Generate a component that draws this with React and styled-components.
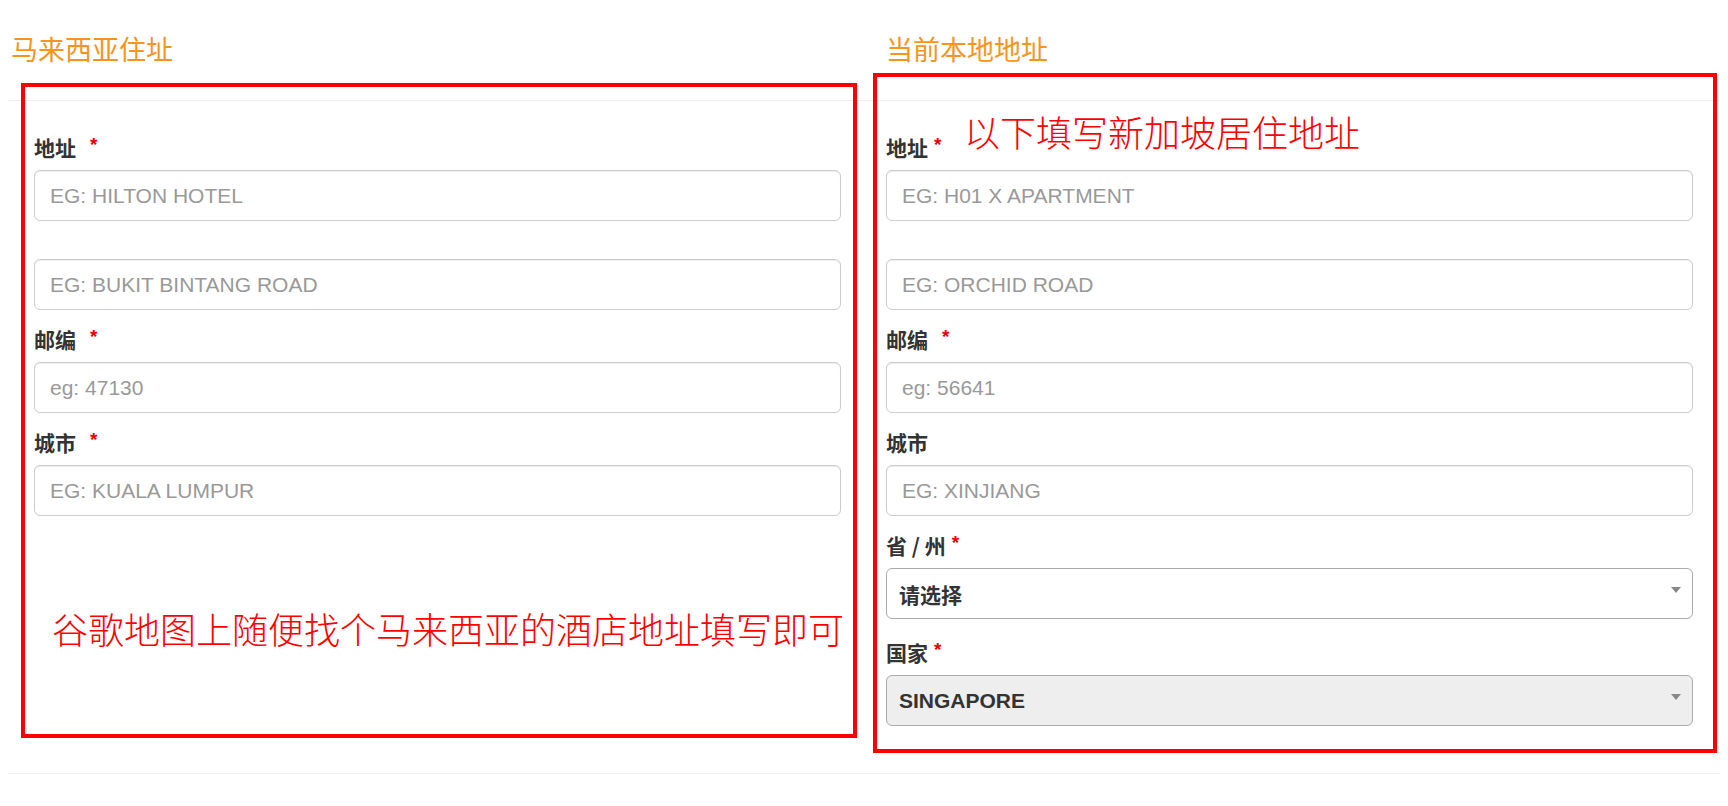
import styled, { createGlobalStyle } from 'styled-components'

const GlobalStyle = createGlobalStyle`
  body {
    margin: 0;
    background: #fff;
    font-family: "Liberation Sans", "Noto Sans CJK SC", sans-serif;
  }
`

// #region styles
const Page = styled.div`
  position: relative;
  width: 1728px;
  padding: 0 8px;
  box-sizing: border-box;
`

const Header = styled.div`
  display: grid;
  grid-template-columns: 856px 856px;
  height: 101px;
  box-sizing: border-box;
  border-bottom: 1px solid #eee;
`

const Title = styled.h4`
  margin: 0;
  padding: 34px 0 0 ${({ $indent }) => $indent}px;
  font-family: "Noto Sans CJK SC", sans-serif;
  font-weight: 400;
  font-size: 27px;
  line-height: 30px;
  color: #f7941d;
`

const Body = styled.div`
  display: grid;
  grid-template-columns: 856px 856px;
  padding: 31px 0 47px;
  border-bottom: 1px solid #eee;
`

const Column = styled.div`
  padding: 0 ${({ $right }) => $right}px 0 ${({ $left }) => $left}px;
`

const FormGroup = styled.div`
  margin-bottom: ${({ $gap }) => $gap}px;

  &:last-child {
    margin-bottom: 0;
  }
`

const Label = styled.label`
  display: flex;
  align-items: center;
  height: 30px;
  margin-bottom: 8px;
  font-family: "Noto Sans CJK SC", sans-serif;
  font-weight: 700;
  font-size: 21px;
  color: #333;
`

const Required = styled.span`
  margin-left: ${({ $gap }) => $gap}px;
  font-family: "Liberation Sans", sans-serif;
  font-size: 19px;
  color: #e00;
  align-self: flex-start;
  margin-top: 2px;
`

const Input = styled.input`
  display: block;
  width: 100%;
  height: 51px;
  margin-top: ${({ $offset }) => $offset || 0}px;
  padding: 0 15px;
  box-sizing: border-box;
  border: 1px solid #ccc;
  border-radius: 6px;
  box-shadow: inset 0 1px 1px rgba(0, 0, 0, 0.075);
  font-family: "Liberation Sans", sans-serif;
  font-size: 21px;
  color: #555;
  background: #fff;
  outline: none;

  &::placeholder {
    color: #999;
  }
`

const SelectBox = styled.div`
  display: flex;
  align-items: center;
  justify-content: space-between;
  height: 51px;
  padding: 0 11px 0 12px;
  box-sizing: border-box;
  border: 1px solid #aaa;
  border-radius: 6px;
  background: ${({ $disabled }) => ($disabled ? '#eee' : '#fff')};
  font-family: "Liberation Sans", "Noto Sans CJK SC", sans-serif;
  font-weight: 700;
  font-size: 21px;
  color: #333;
`

const Arrow = styled.span`
  width: 0;
  height: 0;
  margin-top: -7px;
  border-left: 5px solid transparent;
  border-right: 5px solid transparent;
  border-top: 6px solid #888;
`

const RedBox = styled.div`
  position: absolute;
  left: ${({ $x }) => $x}px;
  top: ${({ $y }) => $y}px;
  width: ${({ $w }) => $w}px;
  height: ${({ $h }) => $h}px;
  box-sizing: border-box;
  border: 4px solid #f00;
  pointer-events: none;
`

const Note = styled.div`
  position: absolute;
  left: ${({ $x }) => $x}px;
  top: ${({ $y }) => $y}px;
  font-family: "Noto Sans CJK SC", sans-serif;
  font-weight: 300;
  font-size: 36px;
  line-height: 36px;
  color: #f00;
  white-space: nowrap;
`
// #endregion

const Field = ({ label, star, gap = 14, children }) => (
  <FormGroup $gap={gap}>
    <Label>
      {label}
      {star ? <Required $gap={star}>*</Required> : null}
    </Label>
    {children}
  </FormGroup>
)

const Select = ({ value, disabled }) => (
  <SelectBox $disabled={disabled}>
    <span>{value}</span>
    <Arrow />
  </SelectBox>
)

export default function App() {
  return (
    <>
      <GlobalStyle />
      <Page>
        <Header>
          <Title $indent={3}>马来西亚住址</Title>
          <Title $indent={22}>当前本地地址</Title>
        </Header>
        <Body>
          <Column $left={26} $right={23}>
            <Field label="地址" star={14}>
              <Input readOnly placeholder="EG: HILTON HOTEL" />
              <Input readOnly $offset={38} placeholder="EG: BUKIT BINTANG ROAD" />
            </Field>
            <Field label="邮编" star={14}>
              <Input readOnly placeholder="eg: 47130" />
            </Field>
            <Field label="城市" star={14}>
              <Input readOnly placeholder="EG: KUALA LUMPUR" />
            </Field>
          </Column>
          <Column $left={22} $right={27}>
            <Field label="地址" star={6}>
              <Input readOnly placeholder="EG: H01 X APARTMENT" />
              <Input readOnly $offset={38} placeholder="EG: ORCHID ROAD" />
            </Field>
            <Field label="邮编" star={14}>
              <Input readOnly placeholder="eg: 56641" />
            </Field>
            <Field label="城市">
              <Input readOnly placeholder="EG: XINJIANG" />
            </Field>
            <Field label="省 / 州" star={6} gap={18}>
              <Select value="请选择" />
            </Field>
            <Field label="国家" star={6}>
              <Select value="SINGAPORE" disabled />
            </Field>
          </Column>
        </Body>

        <RedBox $x={21} $y={83} $w={836} $h={655} />
        <RedBox $x={873} $y={73} $w={844} $h={680} />
        <Note $x={964} $y={113}>以下填写新加坡居住地址</Note>
        <Note $x={52} $y={610}>谷歌地图上随便找个马来西亚的酒店地址填写即可</Note>
      </Page>
    </>
  )
}
